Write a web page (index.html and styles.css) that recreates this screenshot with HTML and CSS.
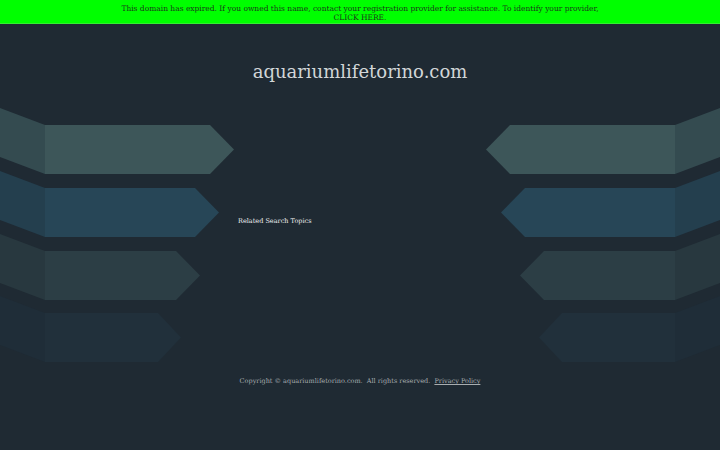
FILE: index.html
```html
<!DOCTYPE html>
<html>
<head>
<meta charset="utf-8">
<link rel="stylesheet" href="styles.css">
</head>
<body>
<div class="notice">This domain has expired. If you owned this name, contact your registration provider for assistance. To identify your provider,<br><a href="#">CLICK HERE.</a></div>
<h1 class="title">aquariumlifetorino.com</h1>
<div class="main">
  <svg class="wing" width="235" height="262" viewBox="0 0 235 262">
    <polygon class="s1" points="0,8 45,25 45,74 0,57"/>
    <polygon class="r1" points="45,25 210,25 234,49.5 210,74 45,74"/>
    <polygon class="s2" points="0,71 45,88 45,137 0,120"/>
    <polygon class="r2" points="45,88 195,88 219,112.5 195,137 45,137"/>
    <polygon class="s3" points="0,134 45,151 45,200 0,183"/>
    <polygon class="r3" points="45,151 176,151 200,175.5 176,200 45,200"/>
    <polygon class="s4" points="0,196 45,213 45,262 0,245"/>
    <polygon class="r4" points="45,213 158,213 181,237.5 158,262 45,262"/>
  </svg>
  <div class="center"><span class="related">Related Search Topics</span></div>
  <svg class="wing flip" width="235" height="262" viewBox="0 0 235 262">
    <polygon class="s1" points="0,8 45,25 45,74 0,57"/>
    <polygon class="r1" points="45,25 210,25 234,49.5 210,74 45,74"/>
    <polygon class="s2" points="0,71 45,88 45,137 0,120"/>
    <polygon class="r2" points="45,88 195,88 219,112.5 195,137 45,137"/>
    <polygon class="s3" points="0,134 45,151 45,200 0,183"/>
    <polygon class="r3" points="45,151 176,151 200,175.5 176,200 45,200"/>
    <polygon class="s4" points="0,196 45,213 45,262 0,245"/>
    <polygon class="r4" points="45,213 158,213 181,237.5 158,262 45,262"/>
  </svg>
</div>
<div class="footer">Copyright © aquariumlifetorino.com.&nbsp; All rights reserved.&nbsp; <a href="#">Privacy Policy</a></div>
</body>
</html>
```
FILE: styles.css
```css
html, body {
  margin: 0;
  padding: 0;
  background: #1f2a33;
  font-family: "DejaVu Serif", serif;
  height: 100%;
}
.notice {
  background: #00ff00;
  color: #1a3a1a;
  font-size: 7.5px;
  line-height: 9px;
  text-align: center;
  height: 24px;
  padding-top: 4px;
  box-sizing: border-box;
  border-bottom: 1px solid #33ee33;
}
.notice a {
  color: #1a3a1a;
  text-decoration: none;
}
.title {
  margin: 36px 0 16px;
  font-weight: normal;
  font-size: 18px;
  line-height: 24px;
  text-align: center;
  color: #d2d6d8;
}
.main {
  display: flex;
  height: 262px;
}
.wing {
  flex: none;
  display: block;
}
.flip {
  transform: scaleX(-1);
}
.center {
  flex: 1;
  padding: 116px 0 0 3px;
}
.related {
  font-size: 6.5px;
  line-height: 10px;
  color: #f0f0f0;
  display: block;
}
.s1 { fill: #344b50; }
.r1 { fill: #3d5659; }
.s2 { fill: #243f4e; }
.r2 { fill: #274657; }
.s3 { fill: #28383f; }
.r3 { fill: #2c3e45; }
.s4 { fill: #1f2d38; }
.r4 { fill: #21303b; }
.footer {
  margin-top: 14px;
  text-align: center;
  font-size: 6.5px;
  line-height: 10px;
  color: #a8adb0;
}
.footer a {
  color: #a8adb0;
}
```
